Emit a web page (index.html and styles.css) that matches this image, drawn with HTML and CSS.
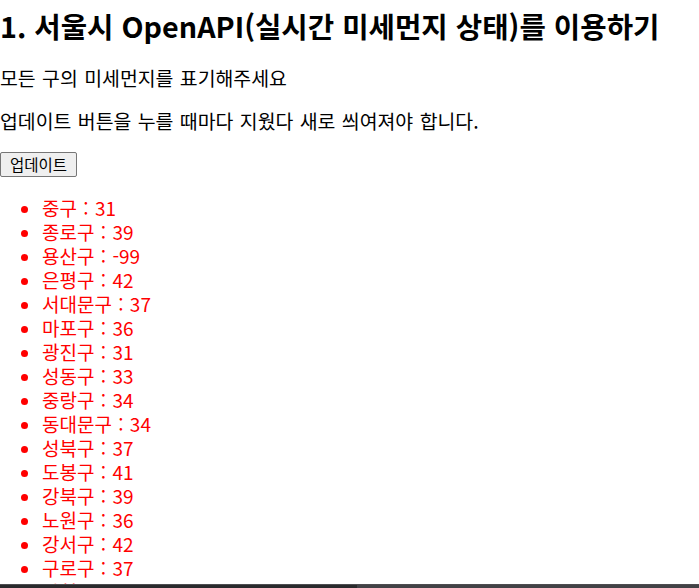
FILE: index.html
```html
<!DOCTYPE html>
<html lang="ko">
<head>
<meta charset="utf-8">
<title>서울시 미세먼지</title>
<link rel="stylesheet" href="styles.css">
</head>
<body>
<h1 class="title">1. 서울시 OpenAPI(실시간 미세먼지 상태)를 이용하기</h1>
<p class="desc">모든 구의 미세먼지를 표기해주세요</p>
<p class="desc">업데이트 버튼을 누를 때마다 지웠다 새로 씌여져야 합니다.</p>
<div class="actions"><button class="update-btn" type="button">업데이트</button></div>
<ul class="dust-list">
<li>중구 : 31</li>
<li>종로구 : 39</li>
<li>용산구 : -99</li>
<li>은평구 : 42</li>
<li>서대문구 : 37</li>
<li>마포구 : 36</li>
<li>광진구 : 31</li>
<li>성동구 : 33</li>
<li>중랑구 : 34</li>
<li>동대문구 : 34</li>
<li>성북구 : 37</li>
<li>도봉구 : 41</li>
<li>강북구 : 39</li>
<li>노원구 : 36</li>
<li>강서구 : 42</li>
<li>구로구 : 37</li>
<li>양천구 : 35</li>
<li>영등포구 : 38</li>
<li>동작구 : 36</li>
<li>관악구 : 35</li>
<li>금천구 : 37</li>
<li>강남구 : 33</li>
<li>서초구 : 34</li>
<li>송파구 : 35</li>
<li>강동구 : 32</li>
</ul>
<div class="hscroll"><div class="hscroll-thumb"></div></div>
</body>
</html>
```
FILE: styles.css
```css
html, body {
  margin: 0;
  padding: 0;
  background: #ffffff;
  overflow: hidden;
}
body {
  font-family: "Noto Sans CJK KR", "Noto Sans", sans-serif;
  font-size: 19px;
  color: #000000;
}
.title {
  font-size: 28.7px;
  font-weight: bold;
  line-height: 36px;
  margin: 8px 0 22px;
  white-space: nowrap;
}
.desc {
  font-size: 19.4px;
  line-height: 24px;
  margin: 19px 0;
  word-spacing: 1px;
}
.actions {
  margin: 19px 0;
}
.update-btn {
  display: block;
  font-family: "Noto Sans CJK KR", "Noto Sans", sans-serif;
  font-size: 15.5px;
  line-height: 19px;
  height: 25px;
  padding: 0 9px;
  margin: 0;
  color: #000;
  background: #efefef;
  border: 1px solid #767676;
  border-radius: 2px;
}
.dust-list {
  margin: 19px 0 0;
  padding-left: 42px;
  color: #ff0000;
  line-height: 24px;
  word-spacing: 1px;
}
.hscroll {
  position: fixed;
  left: 0;
  right: 0;
  bottom: 0;
  height: 3px;
  border-top: 1px solid #4d4d50;
  background: #424246;
}
.hscroll-thumb {
  width: 357px;
  height: 100%;
  background: #2a2a2c;
}
```
